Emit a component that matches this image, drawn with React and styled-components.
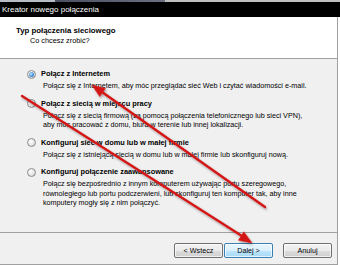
import React from 'react';
import styled, { createGlobalStyle } from 'styled-components';

const GlobalStyle = createGlobalStyle`
  html, body {
    margin: 0;
    padding: 0;
    background: #fff;
  }
  * {
    box-sizing: border-box;
  }
`;

const Window = styled.div`
  position: relative;
  width: 340px;
  height: 265px;
  display: flex;
  flex-flow: column;
  font-family: "Liberation Sans", Arial, sans-serif;
  color: #000;
  overflow: hidden;
`;

const TopStrip = styled.div`
  height: 2px;
  background: linear-gradient(90deg, #b8bcc4 0, #b8bcc4 55px, #4a5060 55px, #6a7080 165px, #c0c0c0 165px);
`;

const TitleBar = styled.div`
  height: 15px;
  background: #000;
  color: #fff;
  font-size: 8px;
  line-height: 15px;
  padding-left: 2px;
`;

const Frame = styled.div`
  flex: 1;
  width: 338px;
  display: flex;
  flex-flow: column;
  border-right: 1px solid #a0a0a0;
  border-bottom: 1px solid #a0a0a0;
`;

const Header = styled.div`
  height: 42px;
  background: #fff;
  padding: 9px 0 0 16px;
  border-bottom: 1px solid #a0a0a0;
`;

const HeaderTitle = styled.div`
  font-weight: bold;
  font-size: 7.8px;
  line-height: 10px;
`;

const HeaderSub = styled.div`
  font-size: 7.3px;
  line-height: 10px;
  padding-left: 14px;
`;

const Body = styled.div`
  flex: 1;
  background: #f0f0f0;
  padding: 10px 0 0 27px;
  display: flex;
  flex-flow: column;
  gap: 8px;
`;

const Option = styled.div`
  display: flex;
  flex-flow: column;
  gap: 2px;
`;

const OptionLabel = styled.div`
  display: flex;
  align-items: center;
  gap: 5px;
  font-weight: bold;
  font-size: 7.4px;
  line-height: 10px;
`;

const Radio = styled.span`
  position: relative;
  width: 9px;
  height: 9px;
  border-radius: 50%;
  border: 1px solid #8c8c8c;
  background: radial-gradient(circle at 35% 35%, #ffffff 0, #e6e6e6 55%, #c4c4c4 100%);
  &::after {
    content: '';
    display: ${(p) => (p.checked ? 'block' : 'none')};
    position: absolute;
    left: 1px;
    top: 1px;
    width: 5px;
    height: 5px;
    border-radius: 50%;
    background: radial-gradient(circle at 40% 40%, #c8ecff 0, #3a8ad8 60%, #1c5ca8 100%);
  }
`;

const OptionDesc = styled.div`
  margin-left: 16px;
  font-size: 7.2px;
  line-height: 9.5px;
`;

const Footer = styled.div`
  height: 32px;
  background: #f0f0f0;
  border-top: 1px solid #a0a0a0;
  display: flex;
  justify-content: flex-end;
  align-items: flex-start;
  padding: 10px 5px 0 0;
`;

const ButtonGroup = styled.div`
  display: flex;
  gap: 1px;
  margin-right: 10px;
`;

const Button = styled.button`
  width: 49px;
  height: 15px;
  padding: 0;
  font-family: "Liberation Sans", Arial, sans-serif;
  font-size: 7.2px;
  color: #000;
  border-radius: 2px;
  border: 1px solid ${(p) => (p.primary ? '#3c7fb1' : '#707070')};
  background: ${(p) => (p.primary
    ? 'linear-gradient(#eaf6fd 0, #d9f0fc 50%, #bee6fd 50%, #a7d9f5 100%)'
    : 'linear-gradient(#f2f2f2 0, #ebebeb 50%, #dddddd 50%, #cfcfcf 100%)')};
  box-shadow: inset 0 0 0 1px rgba(255,255,255,0.7);
`;

const Overlay = styled.svg`
  position: absolute;
  left: 0;
  top: 0;
  width: 340px;
  height: 265px;
  pointer-events: none;
`;

const options = [
  {
    label: 'Połącz z Internetem',
    desc: ['Połącz się z Internetem, aby móc przeglądać sieć Web i czytać wiadomości e-mail.'],
    checked: true
  },
  {
    label: 'Połącz z siecią w miejscu pracy',
    desc: [
      'Połącz się z siecią firmową (za pomocą połączenia telefonicznego lub sieci VPN),',
      'aby móc pracować z domu, biura w terenie lub innej lokalizacji.'
    ]
  },
  {
    label: 'Konfiguruj sieć w domu lub w małej firmie',
    desc: ['Połącz się z istniejącą siecią w domu lub w małej firmie lub skonfiguruj nową.']
  },
  {
    label: 'Konfiguruj połączenie zaawansowane',
    desc: [
      'Połącz się bezpośrednio z innym komputerem używając portu szeregowego,',
      'równoległego lub portu podczerwieni, lub skonfiguruj ten komputer tak, aby inne',
      'komputery mogły się z nim połączyć.'
    ]
  }
];

const Arrows = () => (
  <Overlay viewBox="0 0 340 265">
    <defs>
      <filter id="shadow" x="-10%" y="-10%" width="120%" height="120%">
        <feDropShadow dx="1" dy="1.5" stdDeviation="1" floodColor="#000" floodOpacity="0.35" />
      </filter>
    </defs>
    <g filter="url(#shadow)" fill="#d41818" stroke="#d41818">
      <line x1="265" y1="207" x2="102" y2="92" strokeWidth="2.4" strokeLinecap="round" />
      <polygon points="92,85 105.5,88.4 99.7,96.6" strokeWidth="0.5" />
      <line x1="22" y1="96" x2="242" y2="236" strokeWidth="2.4" strokeLinecap="round" />
      <polygon points="252,243 238.4,240.2 243.8,231.8" strokeWidth="0.5" />
    </g>
  </Overlay>
);

export default function App() {
  return (
    <Window>
      <GlobalStyle />
      <TopStrip />
      <TitleBar>Kreator nowego połączenia</TitleBar>
      <Frame>
        <Header>
          <HeaderTitle>Typ połączenia sieciowego</HeaderTitle>
          <HeaderSub>Co chcesz zrobić?</HeaderSub>
        </Header>
        <Body>
          {options.map((o) => (
            <Option key={o.label}>
              <OptionLabel>
                <Radio checked={o.checked} />
                {o.label}
              </OptionLabel>
              <OptionDesc>
                {o.desc.map((line) => (
                  <div key={line}>{line}</div>
                ))}
              </OptionDesc>
            </Option>
          ))}
        </Body>
        <Footer>
          <ButtonGroup>
            <Button>&lt; Wstecz</Button>
            <Button primary>Dalej &gt;</Button>
          </ButtonGroup>
          <Button>Anuluj</Button>
        </Footer>
      </Frame>
      <Arrows />
    </Window>
  );
}
